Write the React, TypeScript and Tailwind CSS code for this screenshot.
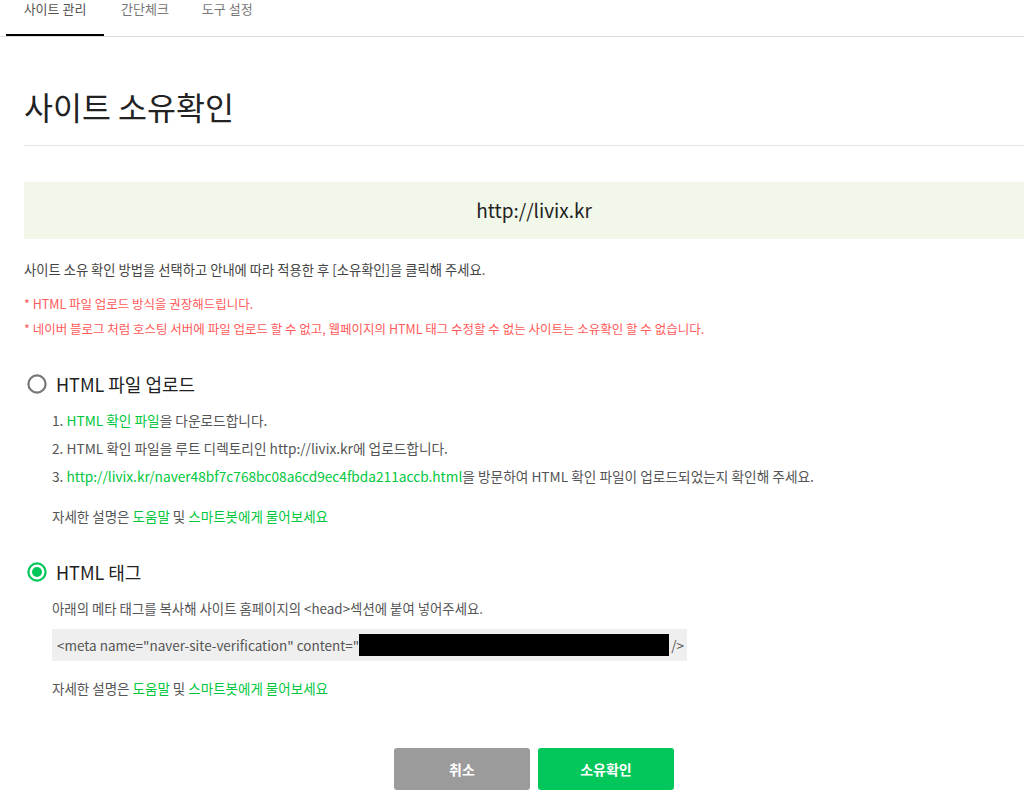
import React from "react";

const font = { fontFamily: '"Noto Sans CJK KR", "Noto Sans", sans-serif' };

function Radio({ checked }: { checked?: boolean }) {
  return checked ? (
    <svg width="20" height="20" viewBox="0 0 20 20" className="shrink-0">
      <circle cx="10" cy="10" r="8.6" fill="none" stroke="#03c75a" strokeWidth="2.2" />
      <circle cx="10" cy="10" r="5" fill="#03c75a" />
    </svg>
  ) : (
    <svg width="20" height="20" viewBox="0 0 20 20" className="shrink-0">
      <circle cx="10" cy="10" r="8.6" fill="none" stroke="#777" strokeWidth="2.2" />
    </svg>
  );
}

function Help() {
  return (
    <p className="leading-[20px] text-[13.5px] text-[#555]">
      자세한 설명은 <span className="text-[#00c73c]">도움말</span> 및{" "}
      <span className="text-[#00c73c]">스마트봇에게 물어보세요</span>
    </p>
  );
}

export default function App() {
  return (
    <div className="w-[1024px] h-[811px] overflow-hidden bg-white" style={font}>
      {/* tabs */}
      <div className="h-[37px] flex border-b border-[#dedede] pl-[6px]">
        <div className="w-[98px] h-[36px] border-b-2 border-black flex justify-center text-[13px] leading-[17px] text-[#555]">
          사이트 관리
        </div>
        <div className="px-[17px] h-[36px] text-[13px] leading-[17px] text-[#777]">간단체크</div>
        <div className="px-[16px] h-[36px] text-[13px] leading-[17px] text-[#777]">도구 설정</div>
      </div>

      <div className="ml-[24px] w-[1020px]">
        <div className="pt-[49px] pb-[19px] border-b border-[#e5e5e5]">
          <h1 className="text-[31.5px] leading-[40px] text-[#222]">사이트 소유확인</h1>
        </div>

        <div className="mt-[36px] h-[57px] bg-[#f1f7e9] flex items-center justify-center text-[19px] text-[#222]">
          http://livix.kr
        </div>

        <p className="mt-[21px] text-[13.3px] leading-[20px] text-[#444]">
          사이트 소유 확인 방법을 선택하고 안내에 따라 적용한 후 [소유확인]을 클릭해 주세요.
        </p>

        <div className="mt-[11px] text-[12.5px] leading-[25px] text-[#ff5a5a]">
          <p>* HTML 파일 업로드 방식을 권장해드립니다.</p>
          <p>* 네이버 블로그 처럼 호스팅 서버에 파일 업로드 할 수 없고, 웹페이지의 HTML 태그 수정할 수 없는 사이트는 소유확인 할 수 없습니다.</p>
        </div>

        <div className="mt-[31px] h-[24px] flex items-center gap-[9px] pl-[3px]">
          <Radio />
          <span className="text-[18px] text-[#222]">HTML 파일 업로드</span>
        </div>

        <div className="pl-[28px]">
          <ol className="mt-[10px] text-[13.7px] leading-[28px] text-[#555]">
            <li>
              1. <span className="text-[#00c73c]">HTML 확인 파일</span>을 다운로드합니다.
            </li>
            <li>2. HTML 확인 파일을 루트 디렉토리인 http://livix.kr에 업로드합니다.</li>
            <li>
              3. <span className="text-[#00c73c]">http://livix.kr/naver48bf7c768bc08a6cd9ec4fbda211accb.html</span>을 방문하여 HTML 확인
              파일이 업로드되었는지 확인해 주세요.
            </li>
          </ol>
          <div className="mt-[16px]">
            <Help />
          </div>
        </div>

        <div className="mt-[34px] h-[24px] flex items-center gap-[9px] pl-[3px]">
          <Radio checked />
          <span className="text-[18px] text-[#222]">HTML 태그</span>
        </div>

        <div className="pl-[28px]">
          <p className="mt-[14px] text-[13.4px] leading-[20px] text-[#555]">
            아래의 메타 태그를 복사해 사이트 홈페이지의 &lt;head&gt;섹션에 붙여 넣어주세요.
          </p>
          <div className="mt-[11px] w-[635px] h-[32px] bg-[#efefef] flex items-center pl-[5px] text-[13.5px] text-[#555]">
            <span>&lt;meta name="naver-site-verification" content="</span>
            <span className="inline-block w-[310px] h-[22px] bg-black" />
            <span className="ml-[2px]">/&gt;</span>
          </div>
          <div className="mt-[17px]">
            <Help />
          </div>
        </div>

        <div className="mt-[50px] flex justify-center gap-[8px]">
          <div className="w-[136px] h-[42px] rounded-[3px] bg-[#9b9b9b] flex items-center justify-center text-white text-[14px] font-bold">
            취소
          </div>
          <div className="w-[136px] h-[42px] rounded-[3px] bg-[#03c75a] flex items-center justify-center text-white text-[14px] font-bold">
            소유확인
          </div>
        </div>
      </div>
    </div>
  );
}
